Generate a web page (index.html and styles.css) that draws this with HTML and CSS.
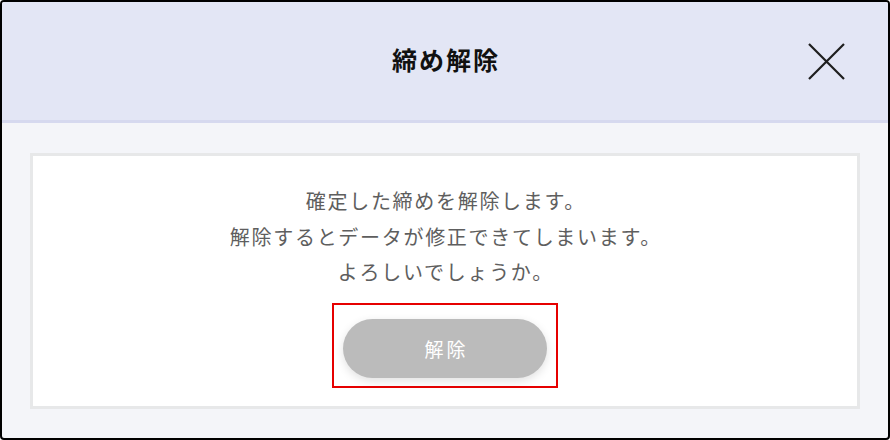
FILE: index.html
```html
<!DOCTYPE html>
<html lang="ja">
<head>
<meta charset="utf-8">
<link rel="stylesheet" href="styles.css">
</head>
<body>
<div class="dialog">
  <header class="dialog-header">
    <h1 class="dialog-title">締め解除</h1>
    <button class="close-btn" aria-label="閉じる">
      <svg width="39" height="39" viewBox="0 0 39 39"><path d="M2 2L37 37M37 2L2 37" stroke="#1e1e1e" stroke-width="2.2" fill="none"/></svg>
    </button>
  </header>
  <main class="dialog-body">
    <section class="card">
      <p class="message">確定した締めを解除します。<br>解除するとデータが修正できてしまいます。<br>よろしいでしょうか。</p>
      <div class="highlight">
        <button class="release-btn">解除</button>
      </div>
    </section>
  </main>
</div>
</body>
</html>
```
FILE: styles.css
```css
html, body {
  margin: 0;
  padding: 0;
  background: #ffffff;
}
body {
  font-family: "Noto Sans CJK JP", "Noto Sans", sans-serif;
}
.dialog {
  width: 890px;
  height: 440px;
  box-sizing: border-box;
  border: 2px solid #000;
  border-radius: 4px;
  overflow: hidden;
  display: flex;
  flex-direction: column;
  background: #f4f5f9;
}
.dialog-header {
  height: 118px;
  flex: 0 0 auto;
  background: #e3e6f5;
  border-bottom: 3px solid #d6d9ef;
  display: flex;
  align-items: center;
  justify-content: center;
  position: relative;
}
.dialog-title {
  margin: 0;
  font-size: 25px;
  font-weight: 700;
  letter-spacing: 2px;
  color: #111;
  padding-left: 2px;
  margin-top: -4px;
}
.close-btn {
  position: absolute;
  right: 42px;
  top: 40px;
  width: 39px;
  height: 39px;
  padding: 0;
  border: none;
  background: none;
  display: block;
}
.close-btn svg {
  display: block;
}
.dialog-body {
  flex: 1;
  padding: 30px 28px 29px;
  display: flex;
}
.card {
  flex: 1;
  background: #fff;
  border: 3px solid #e7e8e9;
  display: flex;
  flex-direction: column;
  align-items: center;
  padding-top: 27px;
}
.message {
  margin: 0;
  text-align: center;
  font-size: 20px;
  line-height: 35.5px;
  letter-spacing: 1.7px;
  color: #5e5e5e;
  padding-left: 1.7px;
}
.highlight {
  margin-top: 13px;
  border: 2px solid #e60000;
  padding: 14px 9px 8px;
}
.release-btn {
  display: block;
  width: 204px;
  height: 59px;
  border: none;
  border-radius: 30px;
  background: #bbbbbb;
  color: #fff;
  font-family: "Noto Sans CJK JP", "Noto Sans", sans-serif;
  font-size: 19px;
  letter-spacing: 3px;
  padding: 0 0 0 3px;
  box-shadow: 0 3px 10px rgba(0, 0, 0, 0.12);
}
```
